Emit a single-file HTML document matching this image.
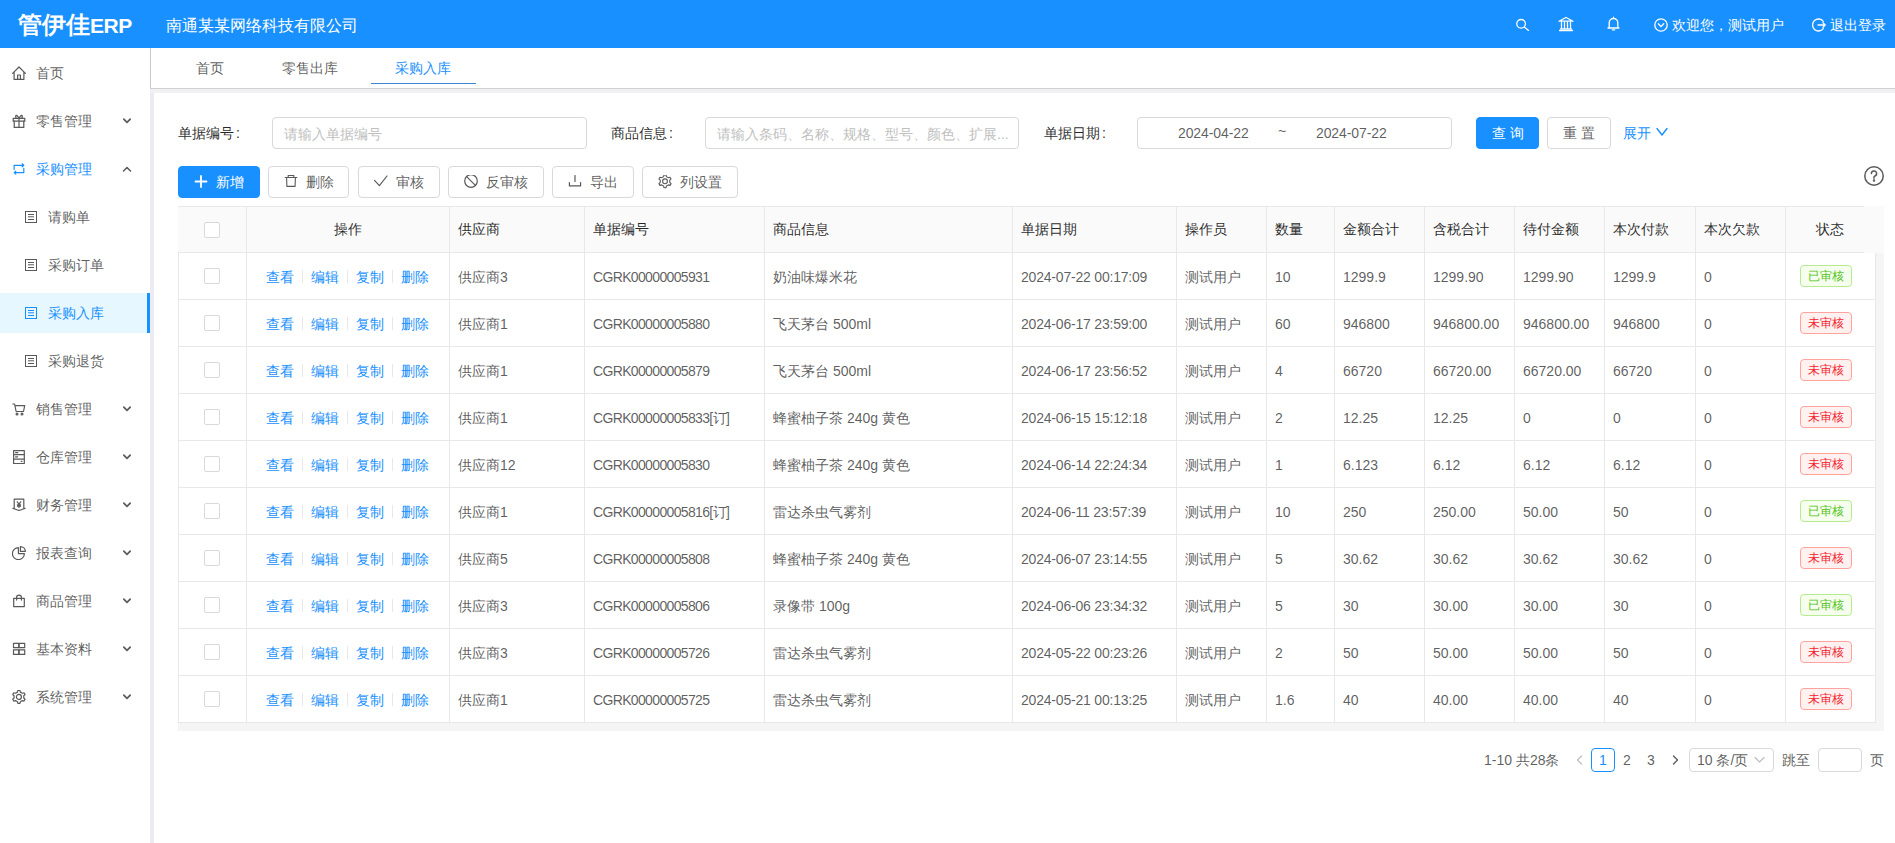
<!DOCTYPE html>
<html><head><meta charset="utf-8">
<style>
*{box-sizing:border-box;margin:0;padding:0}
html,body{width:1895px;height:843px;overflow:hidden;background:#fff;font-family:"Liberation Sans",sans-serif;font-size:14px;color:rgba(0,0,0,.65)}
.abs{position:absolute}
svg{display:block}
.ic,.ar{line-height:0}
#hdr{left:0;top:0;width:1895px;height:48px;background:#1890ff;color:#fff}
#logo{left:18px;top:10px;font-size:24px;font-weight:bold;line-height:30px;white-space:nowrap}
#logo span{font-size:21px;letter-spacing:-.4px}
#corp{left:166px;top:15.5px;font-size:16px;line-height:20px;white-space:nowrap}
.hi{top:18px;height:14px;line-height:14px;white-space:nowrap}
#side{left:0;top:48px;width:150px;height:795px;background:#fff}
.mi{position:absolute;left:0;width:147px;height:40px;line-height:40px;white-space:nowrap}
.mi .ic{position:absolute;top:13px;width:14px;height:14px}
.mi .tx{position:absolute;left:36px;top:0}
.mi .ar{position:absolute;left:122px;top:16px;width:10px;height:8px}
.sub .ic{left:25px;width:12px;height:12px;top:14px}
.sub .tx{left:48px}
.sel{background:#e6f7ff;color:#1890ff;width:150px}
.sel:after{content:"";position:absolute;right:0;top:0;width:3px;height:40px;background:#1890ff}
#vstrip{left:150px;top:93px;width:4px;height:750px;background:#ebebf3}
#vstrip2{left:154px;top:93px;width:4px;height:750px;background:#fafafd}
#tabs{left:150px;top:48px;width:1745px;height:41px;background:#fff;border-left:1px solid #c8c8c8;border-bottom:1px solid #d0d0d0}
#hstrip{left:150px;top:89px;width:1745px;height:4px;background:#f1f1f3}
.tab{position:absolute;top:10px;line-height:20px;white-space:nowrap}

.lbl{top:123px;line-height:20px;color:rgba(0,0,0,.85);white-space:nowrap}
.inp{top:117px;height:32px;border:1px solid #d9d9d9;border-radius:4px;background:#fff;white-space:nowrap}
.ph{position:absolute;left:11px;top:6px;line-height:20px;color:#bfbfbf}
.dt{top:5px;line-height:20px;letter-spacing:-.1px}
.btn{height:32px;border:1px solid #d9d9d9;border-radius:4px;background:#fff;color:rgba(0,0,0,.65);text-align:center;line-height:30px;white-space:nowrap}
.btn.pri{background:#1890ff;border-color:#1890ff;color:#fff}
.tb{top:166px;text-align:left;padding-left:15px}
.tb i{display:inline-block;width:14px;height:14px;vertical-align:-2px;margin-right:8px}

#tbl{left:178px;top:206px;width:1706px;height:525px}
.thd{left:0;top:0;width:1706px;height:47px;background:#fafafa}
.hl{left:0;width:1686px;height:1px;background:#e8e8e8}
#tbl:before{content:"";position:absolute;left:0;top:0;width:1px;height:517px;background:#e8e8e8}
#tbl:after{content:"";position:absolute;left:1697px;top:47px;width:1px;height:470px;background:#e8e8e8}
.th{top:13px;line-height:20px;color:rgba(0,0,0,.85);white-space:nowrap}
.tr{left:0;width:1697px;height:47px;border-bottom:1px solid #e8e8e8}
.td{top:14px;line-height:20px;white-space:nowrap}
.code{letter-spacing:-.65px}
.date{letter-spacing:-.2px}
.vl{top:0;width:1px;height:517px;background:#e8e8e8}
.cb{width:16px;height:16px;border:1px solid #d9d9d9;border-radius:2px;background:#fff}
.ops{top:14px;line-height:20px;white-space:nowrap;color:#1890ff}
.ops a{display:inline-block}
.ops b{display:inline-block;width:1px;height:13px;background:#e8e8e8;margin:0 8px;vertical-align:-1px}
.tag{left:1622px;top:12px;height:22px;line-height:20px;padding:0 7px;font-size:12px;border:1px solid;border-radius:4px;white-space:nowrap}
.ok{background:#f6ffed;border-color:#b7eb8f;color:#52c41a}
.no{background:#fff1f0;border-color:#ffa39e;color:#f5222d}
#scrl{left:178px;top:723px;width:1706px;height:8px;background:#f5f5f5}
#scrv{left:1876px;top:253px;width:8px;height:478px;background:#f5f5f5}

.pgt{top:750px;line-height:20px;white-space:nowrap}
.pgb{top:748px;height:24px;background:#fff}
.cl{margin-left:2px}
</style></head><body>
<div id="hdr" class="abs">
  <div id="logo" class="abs">管伊佳<span>ERP</span></div>
  <div id="corp" class="abs">南通某某网络科技有限公司</div>
  <div class="abs" style="left:1515px;top:17px"><svg width="16" height="16" viewBox="0 0 16 16" fill="none" stroke="#fff" stroke-width="1.3" stroke-linejoin="round" stroke-linecap="round" ><circle cx="6.1" cy="6.8" r="4.3"/><path d="M9.3 10 13.5 13.4"/></svg></div>
  <div class="abs" style="left:1558px;top:16px"><svg width="16" height="16" viewBox="0 0 16 16" fill="none" stroke="#fff" stroke-width="1.3" stroke-linejoin="round" stroke-linecap="round" ><path d="M1 5.2 8 1.5l7 3.7zM1.5 14.5h13M2.5 12.8h11M3.5 6.5v5.3M6.5 6.5v5.3M9.5 6.5v5.3M12.5 6.5v5.3"/></svg></div>
  <div class="abs" style="left:1606px;top:16px"><svg width="15" height="16" viewBox="0 0 15 16" fill="none" stroke="#fff" stroke-width="1.3" stroke-linejoin="round" stroke-linecap="round" ><path d="M3.2 12V6.8a4.3 4.3 0 0 1 8.6 0V12M2 12h11M6.3 13.8h2.4M7.5 1.2v1"/></svg></div>
  <div class="abs" style="left:1654px;top:18px"><svg width="14" height="14" viewBox="0 0 14 14" fill="none" stroke="#fff" stroke-width="1.3" stroke-linejoin="round" stroke-linecap="round" ><circle cx="7" cy="7" r="6.2"/><path d="M4.3 5.8 7 8.6l2.7-2.8"/></svg></div>
  <div class="abs hi" style="left:1672px;font-size:14px">欢迎您，测试用户</div>
  <div class="abs" style="left:1812px;top:18px"><svg width="14" height="14" viewBox="0 0 14 14" fill="none" stroke="#fff" stroke-width="1.3" stroke-linejoin="round" stroke-linecap="round" ><path d="M11.3 3.3A6 6 0 1 0 11.3 10.7"/><path d="M6 7h7.2M11 4.8 13.2 7 11 9.2"/></svg></div>
  <div class="abs hi" style="left:1830px;font-size:14px">退出登录</div>

</div>

<div id="side" class="abs">
<div class="mi" style="top:5px"><div class="ic" style="left:12px"><svg width="14" height="14" viewBox="0 0 14 14" fill="none" stroke="#595959" stroke-width="1.2" stroke-linejoin="round" stroke-linecap="round"><path d="M.6 7.4 7 1l6.4 6.4M2.1 6.2v7.2h9.8V6.2M5.6 13.4V9h2.8v4.4"/></svg></div><div class="tx">首页</div></div>
<div class="mi" style="top:53px"><div class="ic" style="left:12px"><svg width="14" height="14" viewBox="0 0 14 14" fill="none" stroke="#595959" stroke-width="1.2" stroke-linejoin="round" stroke-linecap="round"><rect x="1.2" y="4.4" width="11.6" height="2.8"/><path d="M2.2 7.2v6.2h9.6V7.2M7 4.4v9M7 4.4C6 2.8 5.3 1 4.3 1.4 3.5 1.8 3.8 3.5 4.2 4.4M7 4.4C8 2.8 8.7 1 9.7 1.4c.8.4.5 2.1.1 3"/></svg></div><div class="tx">零售管理</div><div class="ar"><svg width="10" height="8" viewBox="0 0 10 8" fill="none" stroke="#595959" stroke-width="1.7" stroke-linejoin="round" stroke-linecap="round"><path d="M1.8 2.2 5 5.3 8.2 2.2"/></svg></div></div>
<div class="mi" style="top:101px;color:#1890ff"><div class="ic" style="left:12px"><svg width="14" height="14" viewBox="0 0 14 14" fill="none" stroke="#1890ff" stroke-width="1.2" stroke-linejoin="round" stroke-linecap="round"><path d="M2.1 7.6V3.3h9.6M10.2 1.8l1.6 1.5-1.6 1.5M11.8 6.3v4.3H2.2M3.8 9.1 2.2 10.6l1.6 1.5"/></svg></div><div class="tx">采购管理</div><div class="ar"><svg width="10" height="8" viewBox="0 0 10 8" fill="none" stroke="#595959" stroke-width="1.5" stroke-linejoin="round" stroke-linecap="round"><path d="M1.5 6 5 2.5 8.5 6"/></svg></div></div>
<div class="mi sub" style="top:149px"><div class="ic"><svg width="12" height="12" viewBox="0 0 12 12" fill="none" stroke="#595959" stroke-width="1" stroke-linejoin="miter" stroke-linecap="butt"><rect x=".5" y=".5" width="11" height="11"/><path d="M3 3.5h6M3 5.8h6M3 8.5h6"/></svg></div><div class="tx">请购单</div></div>
<div class="mi sub" style="top:197px"><div class="ic"><svg width="12" height="12" viewBox="0 0 12 12" fill="none" stroke="#595959" stroke-width="1" stroke-linejoin="miter" stroke-linecap="butt"><rect x=".5" y=".5" width="11" height="11"/><path d="M3 3.5h6M3 5.8h6M3 8.5h6"/></svg></div><div class="tx">采购订单</div></div>
<div class="mi sub sel" style="top:245px"><div class="ic"><svg width="12" height="12" viewBox="0 0 12 12" fill="none" stroke="#1890ff" stroke-width="1" stroke-linejoin="miter" stroke-linecap="butt"><rect x=".5" y=".5" width="11" height="11"/><path d="M3 3.5h6M3 5.8h6M3 8.5h6"/></svg></div><div class="tx">采购入库</div></div>
<div class="mi sub" style="top:293px"><div class="ic"><svg width="12" height="12" viewBox="0 0 12 12" fill="none" stroke="#595959" stroke-width="1" stroke-linejoin="miter" stroke-linecap="butt"><rect x=".5" y=".5" width="11" height="11"/><path d="M3 3.5h6M3 5.8h6M3 8.5h6"/></svg></div><div class="tx">采购退货</div></div>
<div class="mi" style="top:341px"><div class="ic" style="left:12px"><svg width="14" height="14" viewBox="0 0 14 14" fill="none" stroke="#595959" stroke-width="1.2" stroke-linejoin="round" stroke-linecap="round"><path d="M.8 2h1.8l1.5 7.5h7.4l1.2-5.8H3"/><circle cx="5" cy="12" r=".9"/><circle cx="10" cy="12" r=".9"/></svg></div><div class="tx">销售管理</div><div class="ar"><svg width="10" height="8" viewBox="0 0 10 8" fill="none" stroke="#595959" stroke-width="1.7" stroke-linejoin="round" stroke-linecap="round"><path d="M1.8 2.2 5 5.3 8.2 2.2"/></svg></div></div>
<div class="mi" style="top:389px"><div class="ic" style="left:12px"><svg width="14" height="14" viewBox="0 0 14 14" fill="none" stroke="#595959" stroke-width="1.2" stroke-linejoin="round" stroke-linecap="round"><rect x="1.6" y=".6" width="10.7" height="12.9"/><path d="M1.6 4.6h10.7M1.6 9.2h10.7M3.6 2.6h2.2M3.6 6.9h2M9.2 11.3h.8"/></svg></div><div class="tx">仓库管理</div><div class="ar"><svg width="10" height="8" viewBox="0 0 10 8" fill="none" stroke="#595959" stroke-width="1.7" stroke-linejoin="round" stroke-linecap="round"><path d="M1.8 2.2 5 5.3 8.2 2.2"/></svg></div></div>
<div class="mi" style="top:437px"><div class="ic" style="left:12px"><svg width="14" height="14" viewBox="0 0 14 14" fill="none" stroke="#595959" stroke-width="1.2" stroke-linejoin="round" stroke-linecap="round"><path d="M2.2 10.4V1.2h9.6v9.2M.9 10.4c2 .3 3.5 1.7 6.1 2 2.6-.3 4.1-1.7 6.1-2"/><path d="M5.2 3.8 7 6.2l1.8-2.4M7 6.2v3.3M5.4 6.8h3.2M5.4 8.2h3.2"/></svg></div><div class="tx">财务管理</div><div class="ar"><svg width="10" height="8" viewBox="0 0 10 8" fill="none" stroke="#595959" stroke-width="1.7" stroke-linejoin="round" stroke-linecap="round"><path d="M1.8 2.2 5 5.3 8.2 2.2"/></svg></div></div>
<div class="mi" style="top:485px"><div class="ic" style="left:12px"><svg width="14" height="14" viewBox="0 0 14 14" fill="none" stroke="#595959" stroke-width="1.2" stroke-linejoin="round" stroke-linecap="round"><path d="M6.4 1.6A6 6 0 1 0 12.4 7.6H6.4z"/><path d="M8.4 .6v4.8h5A5 5 0 0 0 8.4 .6z"/></svg></div><div class="tx">报表查询</div><div class="ar"><svg width="10" height="8" viewBox="0 0 10 8" fill="none" stroke="#595959" stroke-width="1.7" stroke-linejoin="round" stroke-linecap="round"><path d="M1.8 2.2 5 5.3 8.2 2.2"/></svg></div></div>
<div class="mi" style="top:533px"><div class="ic" style="left:12px"><svg width="14" height="14" viewBox="0 0 14 14" fill="none" stroke="#595959" stroke-width="1.2" stroke-linejoin="round" stroke-linecap="round"><rect x="1.7" y="4.3" width="10.6" height="8.3"/><path d="M4.6 6.1V3.2a2.4 2.1 0 0 1 4.8 0v2.9"/></svg></div><div class="tx">商品管理</div><div class="ar"><svg width="10" height="8" viewBox="0 0 10 8" fill="none" stroke="#595959" stroke-width="1.7" stroke-linejoin="round" stroke-linecap="round"><path d="M1.8 2.2 5 5.3 8.2 2.2"/></svg></div></div>
<div class="mi" style="top:581px"><div class="ic" style="left:12px"><svg width="14" height="14" viewBox="0 0 14 14" fill="none" stroke="#595959" stroke-width="1.2" stroke-linejoin="round" stroke-linecap="round"><rect x="1.5" y="1.4" width="5.2" height="4.3"/><rect x="7.1" y="1.4" width="5.6" height="4.3"/><rect x="1.5" y="7.8" width="5.2" height="4.6"/><rect x="7.1" y="7.8" width="5.6" height="4.6"/></svg></div><div class="tx">基本资料</div><div class="ar"><svg width="10" height="8" viewBox="0 0 10 8" fill="none" stroke="#595959" stroke-width="1.7" stroke-linejoin="round" stroke-linecap="round"><path d="M1.8 2.2 5 5.3 8.2 2.2"/></svg></div></div>
<div class="mi" style="top:629px"><div class="ic" style="left:12px"><svg width="14" height="14" viewBox="0 0 14 14" fill="none" stroke="#595959" stroke-width="1.2" stroke-linejoin="round" stroke-linecap="round"><path d="M8.36 2.12 L7.93 0.38 L5.87 0.38 L5.44 2.12 L3.49 3.24 L1.77 2.75 L0.74 4.53 L2.03 5.78 L2.03 8.02 L0.74 9.27 L1.77 11.05 L3.49 10.56 L5.44 11.68 L5.87 13.42 L7.93 13.42 L8.36 11.68 L10.31 10.56 L12.03 11.05 L13.06 9.27 L11.77 8.02 L11.77 5.78 L13.06 4.53 L12.03 2.75 L10.31 3.24Z"/><circle cx="6.9" cy="6.9" r="2.5"/></svg></div><div class="tx">系统管理</div><div class="ar"><svg width="10" height="8" viewBox="0 0 10 8" fill="none" stroke="#595959" stroke-width="1.7" stroke-linejoin="round" stroke-linecap="round"><path d="M1.8 2.2 5 5.3 8.2 2.2"/></svg></div></div>
</div>
<div id="tabs" class="abs">
  <div class="tab" style="left:45px">首页</div>
  <div class="tab" style="left:131px">零售出库</div>
  <div class="tab" style="left:244px;color:#1890ff">采购入库</div>
  <div class="abs" style="left:220px;top:34.5px;width:105px;height:1.5px;background:#3d86d6"></div>
</div>
<div id="hstrip" class="abs"></div>
<div id="vstrip" class="abs"></div>

<div class="lbl abs" style="left:178px">单据编号<span class="cl">:</span></div>
<div class="inp abs" style="left:272px;width:315px"><span class="ph">请输入单据编号</span></div>
<div class="lbl abs" style="left:611px">商品信息<span class="cl">:</span></div>
<div class="inp abs" style="left:705px;width:314px"><span class="ph">请输入条码、名称、规格、型号、颜色、扩展...</span></div>
<div class="lbl abs" style="left:1044px">单据日期<span class="cl">:</span></div>
<div class="inp abs" style="left:1137px;width:315px;color:rgba(0,0,0,.65)">
  <span class="abs dt" style="left:40px">2024-04-22</span>
  <span class="abs" style="left:140px;top:5px">~</span>
  <span class="abs dt" style="left:178px">2024-07-22</span>
</div>
<div class="btn pri abs" style="left:1476px;top:117px;width:63px"><span style="letter-spacing:4px;margin-right:-4px">查询</span></div>
<div class="btn abs" style="left:1547px;top:117px;width:64px"><span style="letter-spacing:4px;margin-right:-4px">重置</span></div>
<div class="abs" style="left:1623px;top:123px;line-height:20px;color:#1890ff;white-space:nowrap">展开</div>
<div class="abs" style="left:1656px;top:127px"><svg width="12" height="10" viewBox="0 0 12 10" fill="none" stroke="#1890ff" stroke-width="1.4" stroke-linejoin="round" stroke-linecap="round" ><path d="M1 1.5 6 8l5-6.5"/></svg></div>

<div class="btn pri abs tb" style="left:178px;width:82px"><i><svg width="14" height="14" viewBox="0 0 14 14" fill="none" stroke="#fff" stroke-width="1.8" stroke-linejoin="round" stroke-linecap="round" ><path d="M7 1v11M1.5 6.5h11"/></svg></i>新增</div>
<div class="btn abs tb" style="left:268px;width:81px"><i><svg width="14" height="14" viewBox="0 0 14 14" fill="none" stroke="#595959" stroke-width="1.1" stroke-linejoin="round" stroke-linecap="round" ><path d="M1.1 2.5h11.8M4.2 2.5V.5h5.6v2M2.6 2.5l.3 8.9h8.2l.3-8.9"/></svg></i>删除</div>
<div class="btn abs tb" style="left:358px;width:82px"><i><svg width="14" height="14" viewBox="0 0 14 14" fill="none" stroke="#595959" stroke-width="1.2" stroke-linejoin="round" stroke-linecap="round" ><path d="M.5 5.4 5.4 10.6 13 1"/></svg></i>审核</div>
<div class="btn abs tb" style="left:448px;width:96px"><i><svg width="14" height="14" viewBox="0 0 14 14" fill="none" stroke="#595959" stroke-width="1.2" stroke-linejoin="round" stroke-linecap="round" ><circle cx="7" cy="6" r="6.3"/><path d="M2.6 1.6l8.8 8.8"/></svg></i>反审核</div>
<div class="btn abs tb" style="left:552px;width:82px"><i><svg width="14" height="14" viewBox="0 0 14 14" fill="none" stroke="#595959" stroke-width="1.2" stroke-linejoin="round" stroke-linecap="round" ><path d="M7 .5v5.9M1.4 7.7v3.2h11.2V7.7"/></svg></i>导出</div>
<div class="btn abs tb" style="left:642px;width:96px"><i><svg width="14" height="14" viewBox="0 0 14 14" fill="none" stroke="#595959" stroke-width="1.1" stroke-linejoin="round" stroke-linecap="round" ><path d="M8.43 1.61 L8.02 -0.12 L5.98 -0.12 L5.57 1.61 L3.66 2.72 L1.95 2.21 L0.93 3.97 L2.23 5.20 L2.23 7.40 L0.93 8.63 L1.95 10.39 L3.66 9.88 L5.57 10.99 L5.98 12.72 L8.02 12.72 L8.43 10.99 L10.34 9.88 L12.05 10.39 L13.07 8.63 L11.77 7.40 L11.77 5.20 L13.07 3.97 L12.05 2.21 L10.34 2.72Z"/><circle cx="7" cy="6.3" r="2.4"/></svg></i>列设置</div>
<div class="abs" style="left:1864px;top:166px"><svg width="20" height="20" viewBox="0 0 20 20" fill="none" stroke="#595959" stroke-width="1.5" stroke-linejoin="round" stroke-linecap="round" ><circle cx="10" cy="10" r="9.2"/><path d="M7.4 7.6a2.6 2.6 0 1 1 3.6 2.4c-.7.3-1 .8-1 1.5v.8"/><circle cx="10" cy="14.6" r=".5" fill="#595959"/></svg></div>


<div id="scrv" class="abs"></div><div id="scrl" class="abs"></div>
<div id="tbl" class="abs">
<div class="thd abs"></div><div class="hl abs" style="top:0"></div><div class="hl abs" style="top:46px"></div>
<div class="cb abs" style="left:26px;top:16px"></div>
<div class="th abs" style="left:68px;width:203px;text-align:center">操作</div>
<div class="th abs" style="left:280px">供应商</div>
<div class="th abs" style="left:415px">单据编号</div>
<div class="th abs" style="left:595px">商品信息</div>
<div class="th abs" style="left:843px">单据日期</div>
<div class="th abs" style="left:1007px">操作员</div>
<div class="th abs" style="left:1097px">数量</div>
<div class="th abs" style="left:1165px">金额合计</div>
<div class="th abs" style="left:1255px">含税合计</div>
<div class="th abs" style="left:1345px">待付金额</div>
<div class="th abs" style="left:1435px">本次付款</div>
<div class="th abs" style="left:1526px">本次欠款</div>
<div class="th abs" style="left:1607px;width:90px;text-align:center">状态</div>
<div class="tr abs" style="top:47px">
<div class="cb abs" style="left:26px;top:15px"></div>
<div class="ops abs" style="left:88px"><a>查看</a><b></b><a>编辑</a><b></b><a>复制</a><b></b><a>删除</a></div>
<div class="td abs" style="left:280px">供应商3</div>
<div class="td abs code" style="left:415px">CGRK00000005931</div>
<div class="td abs" style="left:595px">奶油味爆米花</div>
<div class="td abs date" style="left:843px">2024-07-22 00:17:09</div>
<div class="td abs" style="left:1007px">测试用户</div>
<div class="td abs" style="left:1097px">10</div>
<div class="td abs" style="left:1165px">1299.9</div>
<div class="td abs" style="left:1255px">1299.90</div>
<div class="td abs" style="left:1345px">1299.90</div>
<div class="td abs" style="left:1435px">1299.9</div>
<div class="td abs" style="left:1526px">0</div>
<div class="tag ok abs">已审核</div>
</div>
<div class="tr abs" style="top:94px">
<div class="cb abs" style="left:26px;top:15px"></div>
<div class="ops abs" style="left:88px"><a>查看</a><b></b><a>编辑</a><b></b><a>复制</a><b></b><a>删除</a></div>
<div class="td abs" style="left:280px">供应商1</div>
<div class="td abs code" style="left:415px">CGRK00000005880</div>
<div class="td abs" style="left:595px">飞天茅台 500ml</div>
<div class="td abs date" style="left:843px">2024-06-17 23:59:00</div>
<div class="td abs" style="left:1007px">测试用户</div>
<div class="td abs" style="left:1097px">60</div>
<div class="td abs" style="left:1165px">946800</div>
<div class="td abs" style="left:1255px">946800.00</div>
<div class="td abs" style="left:1345px">946800.00</div>
<div class="td abs" style="left:1435px">946800</div>
<div class="td abs" style="left:1526px">0</div>
<div class="tag no abs">未审核</div>
</div>
<div class="tr abs" style="top:141px">
<div class="cb abs" style="left:26px;top:15px"></div>
<div class="ops abs" style="left:88px"><a>查看</a><b></b><a>编辑</a><b></b><a>复制</a><b></b><a>删除</a></div>
<div class="td abs" style="left:280px">供应商1</div>
<div class="td abs code" style="left:415px">CGRK00000005879</div>
<div class="td abs" style="left:595px">飞天茅台 500ml</div>
<div class="td abs date" style="left:843px">2024-06-17 23:56:52</div>
<div class="td abs" style="left:1007px">测试用户</div>
<div class="td abs" style="left:1097px">4</div>
<div class="td abs" style="left:1165px">66720</div>
<div class="td abs" style="left:1255px">66720.00</div>
<div class="td abs" style="left:1345px">66720.00</div>
<div class="td abs" style="left:1435px">66720</div>
<div class="td abs" style="left:1526px">0</div>
<div class="tag no abs">未审核</div>
</div>
<div class="tr abs" style="top:188px">
<div class="cb abs" style="left:26px;top:15px"></div>
<div class="ops abs" style="left:88px"><a>查看</a><b></b><a>编辑</a><b></b><a>复制</a><b></b><a>删除</a></div>
<div class="td abs" style="left:280px">供应商1</div>
<div class="td abs code" style="left:415px">CGRK00000005833[订]</div>
<div class="td abs" style="left:595px">蜂蜜柚子茶 240g 黄色</div>
<div class="td abs date" style="left:843px">2024-06-15 15:12:18</div>
<div class="td abs" style="left:1007px">测试用户</div>
<div class="td abs" style="left:1097px">2</div>
<div class="td abs" style="left:1165px">12.25</div>
<div class="td abs" style="left:1255px">12.25</div>
<div class="td abs" style="left:1345px">0</div>
<div class="td abs" style="left:1435px">0</div>
<div class="td abs" style="left:1526px">0</div>
<div class="tag no abs">未审核</div>
</div>
<div class="tr abs" style="top:235px">
<div class="cb abs" style="left:26px;top:15px"></div>
<div class="ops abs" style="left:88px"><a>查看</a><b></b><a>编辑</a><b></b><a>复制</a><b></b><a>删除</a></div>
<div class="td abs" style="left:280px">供应商12</div>
<div class="td abs code" style="left:415px">CGRK00000005830</div>
<div class="td abs" style="left:595px">蜂蜜柚子茶 240g 黄色</div>
<div class="td abs date" style="left:843px">2024-06-14 22:24:34</div>
<div class="td abs" style="left:1007px">测试用户</div>
<div class="td abs" style="left:1097px">1</div>
<div class="td abs" style="left:1165px">6.123</div>
<div class="td abs" style="left:1255px">6.12</div>
<div class="td abs" style="left:1345px">6.12</div>
<div class="td abs" style="left:1435px">6.12</div>
<div class="td abs" style="left:1526px">0</div>
<div class="tag no abs">未审核</div>
</div>
<div class="tr abs" style="top:282px">
<div class="cb abs" style="left:26px;top:15px"></div>
<div class="ops abs" style="left:88px"><a>查看</a><b></b><a>编辑</a><b></b><a>复制</a><b></b><a>删除</a></div>
<div class="td abs" style="left:280px">供应商1</div>
<div class="td abs code" style="left:415px">CGRK00000005816[订]</div>
<div class="td abs" style="left:595px">雷达杀虫气雾剂</div>
<div class="td abs date" style="left:843px">2024-06-11 23:57:39</div>
<div class="td abs" style="left:1007px">测试用户</div>
<div class="td abs" style="left:1097px">10</div>
<div class="td abs" style="left:1165px">250</div>
<div class="td abs" style="left:1255px">250.00</div>
<div class="td abs" style="left:1345px">50.00</div>
<div class="td abs" style="left:1435px">50</div>
<div class="td abs" style="left:1526px">0</div>
<div class="tag ok abs">已审核</div>
</div>
<div class="tr abs" style="top:329px">
<div class="cb abs" style="left:26px;top:15px"></div>
<div class="ops abs" style="left:88px"><a>查看</a><b></b><a>编辑</a><b></b><a>复制</a><b></b><a>删除</a></div>
<div class="td abs" style="left:280px">供应商5</div>
<div class="td abs code" style="left:415px">CGRK00000005808</div>
<div class="td abs" style="left:595px">蜂蜜柚子茶 240g 黄色</div>
<div class="td abs date" style="left:843px">2024-06-07 23:14:55</div>
<div class="td abs" style="left:1007px">测试用户</div>
<div class="td abs" style="left:1097px">5</div>
<div class="td abs" style="left:1165px">30.62</div>
<div class="td abs" style="left:1255px">30.62</div>
<div class="td abs" style="left:1345px">30.62</div>
<div class="td abs" style="left:1435px">30.62</div>
<div class="td abs" style="left:1526px">0</div>
<div class="tag no abs">未审核</div>
</div>
<div class="tr abs" style="top:376px">
<div class="cb abs" style="left:26px;top:15px"></div>
<div class="ops abs" style="left:88px"><a>查看</a><b></b><a>编辑</a><b></b><a>复制</a><b></b><a>删除</a></div>
<div class="td abs" style="left:280px">供应商3</div>
<div class="td abs code" style="left:415px">CGRK00000005806</div>
<div class="td abs" style="left:595px">录像带 100g</div>
<div class="td abs date" style="left:843px">2024-06-06 23:34:32</div>
<div class="td abs" style="left:1007px">测试用户</div>
<div class="td abs" style="left:1097px">5</div>
<div class="td abs" style="left:1165px">30</div>
<div class="td abs" style="left:1255px">30.00</div>
<div class="td abs" style="left:1345px">30.00</div>
<div class="td abs" style="left:1435px">30</div>
<div class="td abs" style="left:1526px">0</div>
<div class="tag ok abs">已审核</div>
</div>
<div class="tr abs" style="top:423px">
<div class="cb abs" style="left:26px;top:15px"></div>
<div class="ops abs" style="left:88px"><a>查看</a><b></b><a>编辑</a><b></b><a>复制</a><b></b><a>删除</a></div>
<div class="td abs" style="left:280px">供应商3</div>
<div class="td abs code" style="left:415px">CGRK00000005726</div>
<div class="td abs" style="left:595px">雷达杀虫气雾剂</div>
<div class="td abs date" style="left:843px">2024-05-22 00:23:26</div>
<div class="td abs" style="left:1007px">测试用户</div>
<div class="td abs" style="left:1097px">2</div>
<div class="td abs" style="left:1165px">50</div>
<div class="td abs" style="left:1255px">50.00</div>
<div class="td abs" style="left:1345px">50.00</div>
<div class="td abs" style="left:1435px">50</div>
<div class="td abs" style="left:1526px">0</div>
<div class="tag no abs">未审核</div>
</div>
<div class="tr abs" style="top:470px">
<div class="cb abs" style="left:26px;top:15px"></div>
<div class="ops abs" style="left:88px"><a>查看</a><b></b><a>编辑</a><b></b><a>复制</a><b></b><a>删除</a></div>
<div class="td abs" style="left:280px">供应商1</div>
<div class="td abs code" style="left:415px">CGRK00000005725</div>
<div class="td abs" style="left:595px">雷达杀虫气雾剂</div>
<div class="td abs date" style="left:843px">2024-05-21 00:13:25</div>
<div class="td abs" style="left:1007px">测试用户</div>
<div class="td abs" style="left:1097px">1.6</div>
<div class="td abs" style="left:1165px">40</div>
<div class="td abs" style="left:1255px">40.00</div>
<div class="td abs" style="left:1345px">40.00</div>
<div class="td abs" style="left:1435px">40</div>
<div class="td abs" style="left:1526px">0</div>
<div class="tag no abs">未审核</div>
</div>
<div class="vl abs" style="left:68px"></div>
<div class="vl abs" style="left:271px"></div>
<div class="vl abs" style="left:406px"></div>
<div class="vl abs" style="left:586px"></div>
<div class="vl abs" style="left:834px"></div>
<div class="vl abs" style="left:998px"></div>
<div class="vl abs" style="left:1088px"></div>
<div class="vl abs" style="left:1156px"></div>
<div class="vl abs" style="left:1246px"></div>
<div class="vl abs" style="left:1336px"></div>
<div class="vl abs" style="left:1426px"></div>
<div class="vl abs" style="left:1517px"></div>
<div class="vl abs" style="left:1607px"></div>
</div>

<div class="pgt abs" style="left:1484px">1-10 共28条</div>
<div class="abs" style="left:1575px;top:755px"><svg width="9" height="10" viewBox="0 0 9 10" fill="none" stroke="#bfbfbf" stroke-width="1.3" stroke-linejoin="round" stroke-linecap="round"><path d="M6.5 1 2.5 5l4 4"/></svg></div>
<div class="abs pgb" style="left:1591px;width:24px;border:1px solid #1890ff;color:#1890ff;line-height:22px;text-align:center;border-radius:4px">1</div>
<div class="pgt abs" style="left:1615px;width:24px;text-align:center">2</div>
<div class="pgt abs" style="left:1639px;width:24px;text-align:center">3</div>
<div class="abs" style="left:1671px;top:755px"><svg width="9" height="10" viewBox="0 0 9 10" fill="none" stroke="#595959" stroke-width="1.3" stroke-linejoin="round" stroke-linecap="round"><path d="M2.5 1l4 4-4 4"/></svg></div>
<div class="abs pgb" style="left:1689px;width:85px;border:1px solid #d9d9d9;border-radius:4px"><span class="abs" style="left:7px;top:1px;line-height:20px">10 条/页</span><div class="abs" style="left:64px;top:6px"><svg width="11" height="9" viewBox="0 0 11 9" fill="none" stroke="#bfbfbf" stroke-width="1.2" stroke-linejoin="round" stroke-linecap="round"><path d="M1 2.5 5.5 7 10 2.5"/></svg></div></div>
<div class="pgt abs" style="left:1782px">跳至</div>
<div class="abs pgb" style="left:1818px;width:44px;border:1px solid #d9d9d9;border-radius:4px"></div>
<div class="pgt abs" style="left:1870px">页</div>
</body></html>
